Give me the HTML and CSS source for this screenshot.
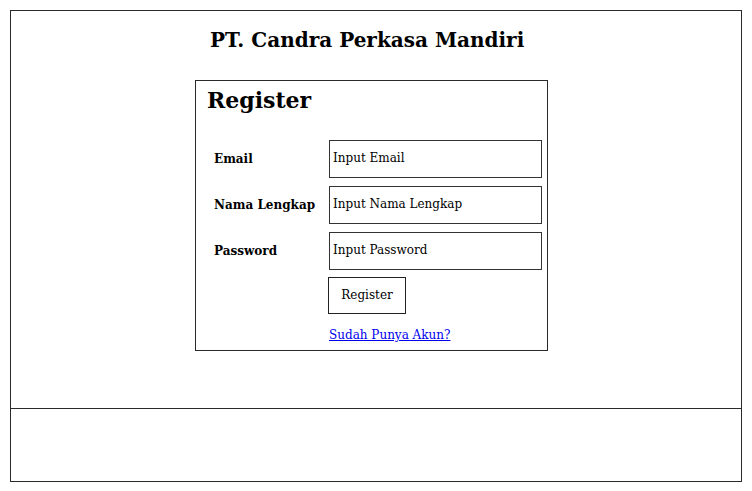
FILE: index.html
```html
<!DOCTYPE html>
<html>
<head>
<meta charset="utf-8">
<link rel="stylesheet" href="styles.css">
</head>
<body>
<div class="frame">
  <div class="main">
    <h1 class="title">PT. Candra Perkasa Mandiri</h1>
    <div class="box">
      <h2 class="heading">Register</h2>
      <form class="form">
        <label class="label">Email</label>
        <div class="input">Input Email</div>
        <label class="label">Nama Lengkap</label>
        <div class="input">Input Nama Lengkap</div>
        <label class="label">Password</label>
        <div class="input">Input Password</div>
        <span></span>
        <div class="actions"><div class="button">Register</div></div>
        <span></span>
        <a class="link" href="#">Sudah Punya Akun?</a>
      </form>
    </div>
  </div>
  <div class="footer"></div>
</div>
</body>
</html>
```

FILE: styles.css
```css
html, body {
  margin: 0;
  padding: 0;
  background: #fff;
}
body {
  font-family: "DejaVu Serif", serif;
  color: #000;
}
.frame {
  margin: 10px 0 0 10px;
  width: 732px;
  height: 472px;
  box-sizing: border-box;
  border: 1px solid #2a2a2a;
  display: flex;
  flex-direction: column;
}
.main {
  height: 397px;
  border-bottom: 1px solid #2a2a2a;
  display: flex;
  flex-direction: column;
  align-items: flex-start;
}
.title {
  margin: 15px 0 0 199px;
  font-size: 20px;
  line-height: 28px;
  font-weight: bold;
}
.box {
  margin: 26px 0 0 184px;
  width: 353px;
  height: 271px;
  box-sizing: border-box;
  border: 1px solid #2a2a2a;
  padding: 0 4px 0 12px;
}
.heading {
  margin: 5px 0 0 -1px;
  font-size: 22px;
  line-height: 28px;
  font-weight: bold;
}
.form {
  margin-top: 26px;
  display: grid;
  grid-template-columns: 115px 213px;
  row-gap: 8px;
  padding-left: 6px;
}
.label {
  font-size: 12px;
  font-weight: bold;
  line-height: 38px;
  height: 38px;
}
.input {
  height: 38px;
  box-sizing: border-box;
  border: 1px solid #333;
  font-size: 12px;
  line-height: 34px;
  padding: 0 3px;
}
.actions {
  display: flex;
  margin: -1px 0 0 -1px;
}
.button {
  width: 78px;
  height: 37px;
  box-sizing: border-box;
  border: 1px solid #222;
  font-size: 12px;
  line-height: 34px;
  text-align: center;
}
.link {
  font-size: 12px;
  line-height: 20px;
  color: #0000ee;
  text-decoration: underline;
  margin-top: 3px;
  justify-self: start;
}
.footer {
  flex: 1;
}
```
